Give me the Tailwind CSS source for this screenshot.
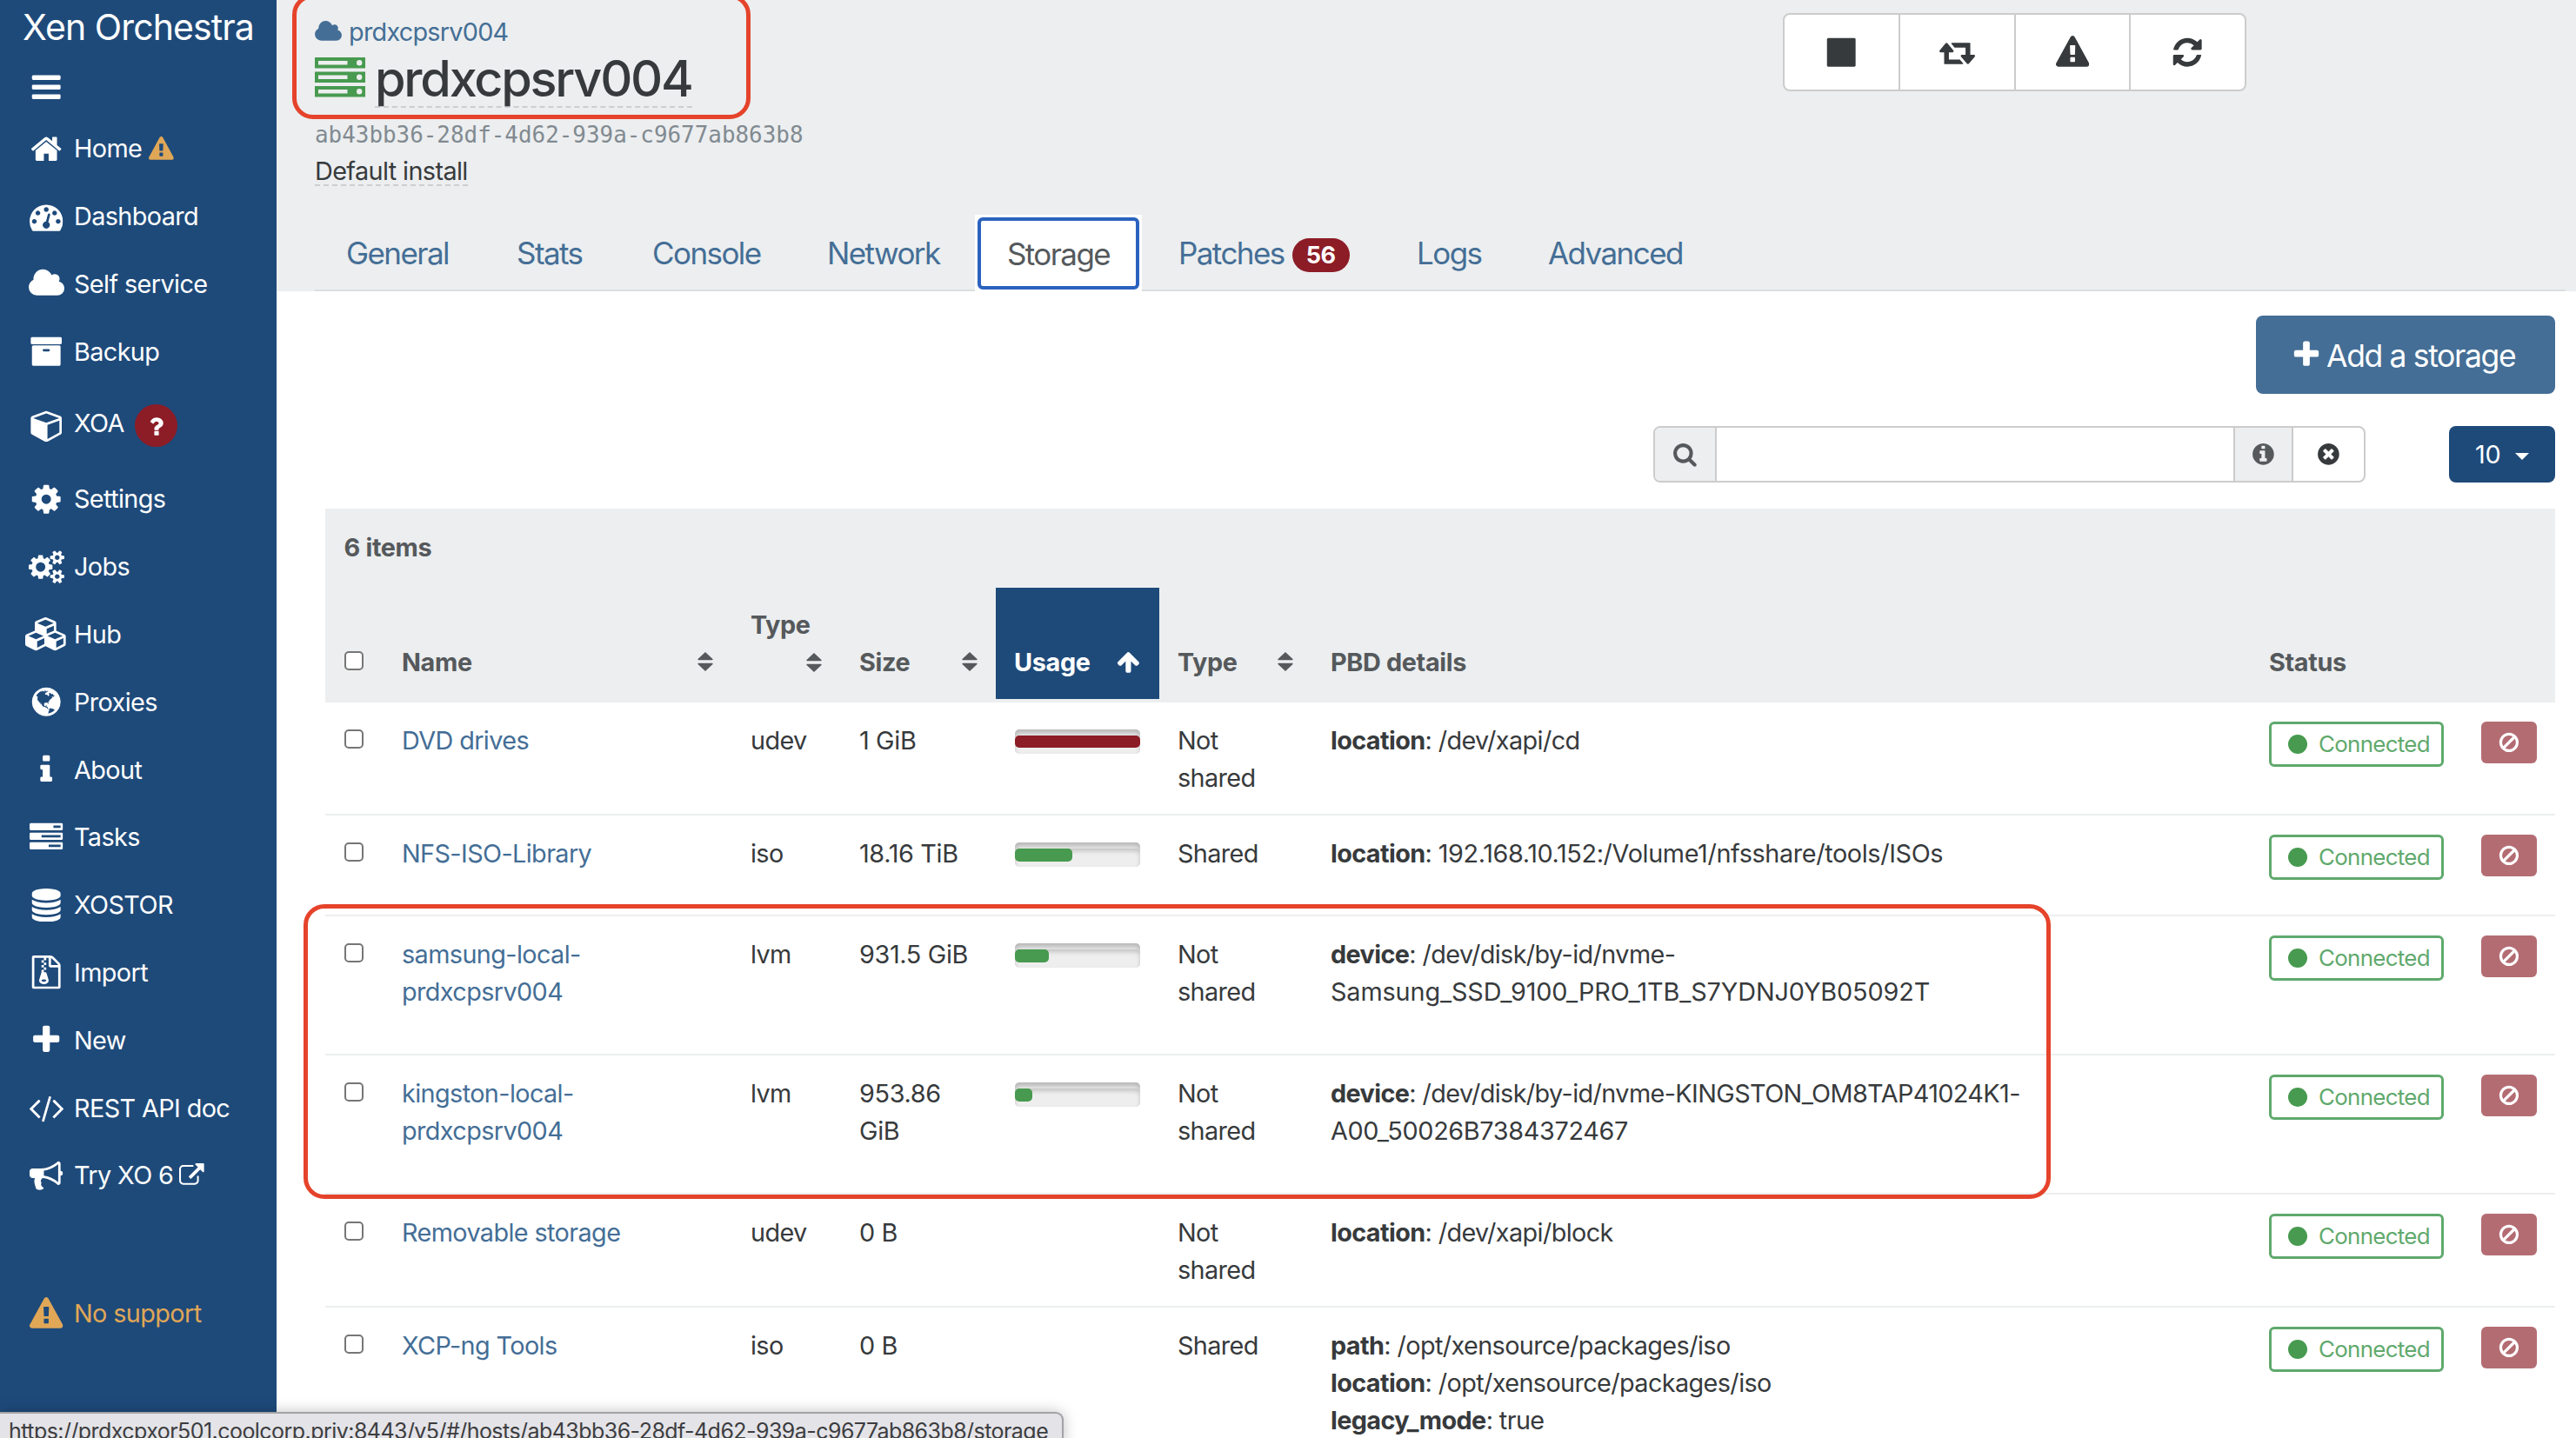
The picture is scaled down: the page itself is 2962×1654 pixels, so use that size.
<!DOCTYPE html>
<html lang="en">
<head>
  <meta charset="UTF-8" />
  <meta name="viewport" content="width=device-width, initial-scale=1" />
  <title>prdxcpsrv004 - Xen Orchestra</title>

  <!-- Tailwind -->
  <script src="https://cdn.jsdelivr.net/npm/@tailwindcss/browser@4"></script>
</head>
<body class="relative h-[1654px] w-[2962px] overflow-hidden bg-white font-[Inter,'Liberation_Sans',sans-serif] text-[28.8px] leading-[43.2px] tracking-[-0.021em] text-[#373a3c]">

  <!-- ───────────  Icon sprite  ─────────── -->
  <svg class="hidden">
    <symbol id="bars" viewBox="0 0 1792 1792"><path d="M1664 1344v128q0 26-19 45t-45 19h-1408q-26 0-45-19t-19-45v-128q0-26 19-45t45-19h1408q26 0 45 19t19 45zm0-512v128q0 26-19 45t-45 19h-1408q-26 0-45-19t-19-45v-128q0-26 19-45t45-19h1408q26 0 45 19t19 45zm0-512v128q0 26-19 45t-45 19h-1408q-26 0-45-19t-19-45v-128q0-26 19-45t45-19h1408q26 0 45 19t19 45z"/></symbol>
    <symbol id="home" viewBox="0 0 1792 1792"><path d="M1472 992v480q0 26-19 45t-45 19h-384v-384h-256v384h-384q-26 0-45-19t-19-45v-480q0-1 .5-3t.5-3l575-474 575 474q1 2 1 6zm223-69l-62 74q-8 9-21 11h-3q-13 0-21-7l-692-577-692 577q-12 8-24 7-13-2-21-11l-62-74q-8-10-7-23.5t11-21.5l719-599q32-26 76-26t76 26l244 204v-195q0-14 9-23t23-9h192q14 0 23 9t9 23v408l219 182q10 8 11 21.5t-7 23.5z"/></symbol>
    <symbol id="warning" viewBox="0 0 1792 1792"><path d="M1024 1375v-190q0-14-9.5-23.5t-22.5-9.5h-192q-13 0-22.5 9.5t-9.5 23.5v190q0 14 9.5 23.5t22.5 9.5h192q13 0 22.5-9.5t9.5-23.5zm-2-374l18-459q0-12-10-19-13-11-24-11h-220q-11 0-24 11-10 7-10 21l17 457q0 10 10 16.5t24 6.5h185q14 0 23.5-6.5t10.5-16.5zm-14-934l768 1408q35 63-2 126-17 29-46.5 46t-63.5 17h-1536q-34 0-63.5-17t-46.5-46q-37-63-2-126l768-1408q17-31 47-49t65-18 65 18 47 49z"/></symbol>
    <symbol id="dashboard" viewBox="0 0 1792 1792"><path d="M384 1152q0-53-37.5-90.5t-90.5-37.5-90.5 37.5-37.5 90.5 37.5 90.5 90.5 37.5 90.5-37.5 37.5-90.5zm192-448q0-53-37.5-90.5t-90.5-37.5-90.5 37.5-37.5 90.5 37.5 90.5 90.5 37.5 90.5-37.5 37.5-90.5zm428 481l101-382q6-26-7.5-48.5t-38.5-29.5-48 6.5-30 39.5l-101 382q-60 5-107 43.5t-63 98.5q-20 77 20 146t117 89 146-20 89-117q16-60-6-117t-72-91zm660-33q0-53-37.5-90.5t-90.5-37.5-90.5 37.5-37.5 90.5 37.5 90.5 90.5 37.5 90.5-37.5 37.5-90.5zm-640-640q0-53-37.5-90.5t-90.5-37.5-90.5 37.5-37.5 90.5 37.5 90.5 90.5 37.5 90.5-37.5 37.5-90.5zm448 192q0-53-37.5-90.5t-90.5-37.5-90.5 37.5-37.5 90.5 37.5 90.5 90.5 37.5 90.5-37.5 37.5-90.5zm320 448q0 261-141 483-19 29-54 29h-1402q-35 0-54-29-141-221-141-483 0-182 71-348t191-286 286-191 348-71 348 71 286 191 191 286 71 348z"/></symbol>
    <symbol id="cloud" viewBox="64 0 1920 1792"><path d="M1984 1152q0 159-112.5 271.5t-271.5 112.5h-1088q-185 0-316.5-131.5t-131.5-316.5q0-132 71-241.5t187-163.5q-2-28-2-43 0-212 150-362t362-150q158 0 286.5 88t187.5 230q70-62 166-62 106 0 181 75t75 181q0 75-41 138 129 30 213 134.5t84 239.5z"/></symbol>
    <symbol id="archive" viewBox="0 0 1792 1792"><path d="M1088 832q0-26-19-45t-45-19h-256q-26 0-45 19t-19 45 19 45 45 19h256q26 0 45-19t19-45zm576-192v960q0 26-19 45t-45 19h-1408q-26 0-45-19t-19-45v-960q0-26 19-45t45-19h1408q26 0 45 19t19 45zm64-448v256q0 26-19 45t-45 19h-1536q-26 0-45-19t-19-45v-256q0-26 19-45t45-19h1536q26 0 45 19t19 45z"/></symbol>
    <symbol id="cube" viewBox="-64 0 1792 1792"><path d="M896 1629l640-349v-636l-640 233v752zm-64-865l698-254-698-254-698 254zm832-252v768q0 35-18 65t-49 47l-704 384q-28 16-61 16t-61-16l-704-384q-31-17-49-47t-18-65v-768q0-40 23-73t61-47l704-256q22-8 44-8t44 8l704 256q38 14 61 47t23 73z"/></symbol>
    <symbol id="question" viewBox="0 0 1792 1792"><path d="M1088 1256v240q0 16-12 28t-28 12h-240q-16 0-28-12t-12-28v-240q0-16 12-28t28-12h240q16 0 28 12t12 28zm316-600q0 54-15.5 101t-35 76.5-55 59.5-57.5 43.5-61 35.5q-41 23-68.5 65t-27.5 67q0 17-12 32.5t-28 15.5h-240q-15 0-25.5-18.5t-10.5-37.5v-45q0-83 65-156.5t143-108.5q59-27 84-56t25-76q0-42-46.5-74t-107.5-32q-65 0-108 29-35 25-107 115-13 16-31 16-12 0-25-8l-164-125q-13-10-15.5-25t5.5-28q160-266 464-266 80 0 161 31t146 83 106 127.5 41 158.5z"/></symbol>
    <symbol id="cog" viewBox="0 0 1792 1792"><path d="M1152 896q0-106-75-181t-181-75-181 75-75 181 75 181 181 75 181-75 75-181zm512-109v222q0 12-8 23t-20 13l-185 28q-19 54-39 91 35 50 107 138 10 12 10 25t-9 23q-27 37-99 108t-94 71q-12 0-26-9l-138-108q-44 23-91 38-16 136-29 186-7 28-36 28h-222q-14 0-24.5-8.5t-11.5-21.5l-28-184q-49-16-90-37l-141 107q-10 9-25 9-14 0-25-11-126-114-165-168-7-10-7-23 0-12 8-23 15-21 51-66.5t54-70.5q-27-50-41-99l-183-27q-13-2-21-12.5t-8-23.5v-222q0-12 8-23t19-13l186-28q14-46 39-92-40-57-107-138-10-12-10-24 0-10 9-23 26-36 98.5-107.5t94.5-71.5q13 0 26 10l138 107q44-23 91-38 16-136 29-186 7-28 36-28h222q14 0 24.5 8.5t11.5 21.5l28 184q49 16 90 37l142-107q9-9 24-9 13 0 25 10 129 119 165 170 7 8 7 22 0 12-8 23-15 21-51 66.5t-54 70.5q26 50 41 98l183 28q13 2 21 12.5t8 23.5z"/></symbol>
    <symbol id="cogs" viewBox="0 0 1920 1792"><path d="M896 896q0-106-75-181t-181-75-181 75-75 181 75 181 181 75 181-75 75-181zm768 512q0-52-38-90t-90-38-90 38-38 90q0 53 37.5 90.5t90.5 37.5 90.5-37.5 37.5-90.5zm0-1024q0-52-38-90t-90-38-90 38-38 90q0 53 37.5 90.5t90.5 37.5 90.5-37.5 37.5-90.5zm-384 421v185q0 10-7 19.5t-16 10.5l-155 24q-11 35-32 76 34 48 90 115 7 11 7 20 0 12-7 19-23 30-82.5 89.5t-78.5 59.5q-11 0-21-7l-115-90q-37 19-77 31-11 108-23 155-7 24-30 24h-186q-11 0-20-7.5t-10-17.5l-23-153q-34-10-75-31l-118 89q-7 7-20 7-11 0-21-8-144-133-144-160 0-9 7-19 10-14 41-53t47-61q-23-44-35-82l-152-24q-10-1-17-9.5t-7-19.5v-185q0-10 7-19.5t16-10.5l155-24q11-35 32-76-34-48-90-115-7-11-7-20 0-12 7-20 22-30 82-89t79-59q11 0 21 7l115 90q34-18 77-32 11-108 23-154 7-24 30-24h186q11 0 20 7.5t10 17.5l23 153q34 10 75 31l118-89q8-7 20-7 11 0 21 8 144 133 144 160 0 8-7 19-12 16-42 54t-45 60q23 48 34 82l152 23q10 2 17 10.5t7 19.5zm640 533v140q0 16-149 31-12 27-30 52 51 113 51 138 0 4-4 7-122 71-124 71-8 0-46-47t-52-68q-20 2-30 2t-30-2q-14 21-52 68t-46 47q-2 0-124-71-4-3-4-7 0-25 51-138-18-25-30-52-149-15-149-31v-140q0-16 149-31 13-29 30-52-51-113-51-138 0-4 4-7 4-2 35-20t59-34 30-16q8 0 46 46.5t52 67.5q20-2 30-2t30 2q51-71 92-112l6-2q4 0 124 70 4 3 4 7 0 25-51 138 17 23 30 52 149 15 149 31zm0-1024v140q0 16-149 31-12 27-30 52 51 113 51 138 0 4-4 7-122 71-124 71-8 0-46-47t-52-68q-20 2-30 2t-30-2q-14 21-52 68t-46 47q-2 0-124-71-4-3-4-7 0-25 51-138-18-25-30-52-149-15-149-31v-140q0-16 149-31 13-29 30-52-51-113-51-138 0-4 4-7 4-2 35-20t59-34 30-16q8 0 46 46.5t52 67.5q20-2 30-2t30 2q51-71 92-112l6-2q4 0 124 70 4 3 4 7 0 25-51 138 17 23 30 52 149 15 149 31z"/></symbol>
    <symbol id="cubes" viewBox="0 0 2304 1792"><path d="M640 1632l384-192v-314l-384 164v342zm-64-454l404-173-404-173-404 173zm1088 454l384-192v-314l-384 164v342zm-64-454l404-173-404-173-404 173zm-448-293l384-165v-266l-384 164v267zm-64-379l441-189-441-189-441 189zm1088 518v416q0 36-19 67t-52 47l-448 224q-25 14-57 14t-57-14l-448-224q-4-2-7-4-2 2-7 4l-448 224q-25 14-57 14t-57-14l-448-224q-33-16-52-47t-19-67v-416q0-38 21.5-70t56.5-48l434-186v-400q0-38 21.5-70t56.5-48l448-192q23-10 50-10t50 10l448 192q35 16 56.5 48t21.5 70v400l434 186q36 16 57 48t21 70z"/></symbol>
    <symbol id="globe" viewBox="0 0 1792 1792"><path d="M896 128q209 0 385.5 103t279.5 279.5 103 385.5-103 385.5-279.5 279.5-385.5 103-385.5-103-279.5-279.5-103-385.5 103-385.5 279.5-279.5 385.5-103zm274 521q-2 1-9.5 9.5t-13.5 9.5q2 0 4.5-5t5-11 3.5-7q6-7 22-15 14-6 52-12 34-8 51 11-2-2 9.5-13t14.5-12q3-2 15-4.5t15-7.5l2-22q-12 1-17.5-7t-6.5-21q0 2-6 8 0-7-4.5-8t-11.5 1-9 1q-10-3-15-7.5t-8-16.5-4-15q-2-5-9.5-11t-9.5-10q-1-2-2.5-5.5t-3-6.5-4-5.5-5.5-2.5-7 5-7.5 10-4.5 5q-3-2-6-1.5t-4.5 1-4.5 3-5 3.5q-3 2-8.5 3t-8.5 2q15-5-1-11-10-4-16-3 9-4 7.5-12t-8.5-14h5q-1-4-8.5-8.5t-17.5-8.5-13-6q-8-5-34-9.5t-33-.5q-5 6-4.5 10.5t4 14 3.5 12.5q1 6-5.5 13t-6.5 12q0 7 14 15.5t10 21.5q-3 8-16 16t-16 12q-5 8-1.5 18.5t10.5 16.5q2 2 1.5 4t-3.5 4.5-5.5 4-6.5 3.5l-3 2q-11 5-20.5-6t-13.5-26q-7-25-16-30-23-8-29 1-5-13-41-26-25-9-58-4 6-1 0-15-7-15-19-12 3-6 4-17.5t1-13.5q3-13 12-23 1-1 7-8.5t9.5-13.5.5-6q35 4 50-11 5-5 11.5-17t10.5-17q9-6 14-5.5t14.5 5.5 14.5 5q14 1 15.5-11t-7.5-20q12 1 3-17-4-7-8-9-12-4-27 5-8 4 2 8-1-1-9.5 10.5t-16.5 17.5-16-5q-1-1-5.5-13.5t-9.5-13.5q-8 0-16 15 3-8-11-15t-24-8q19-12-8-27-7-4-20.5-5t-19.5 4q-5 7-5.5 11.5t5 8 10.5 5.5 11.5 4 8.5 3q14 10 8 14-2 1-8.5 3.5t-11.5 4.5-6 4q-3 4 0 14t-2 14q-5-5-9-17.5t-7-16.5q7 9-25 6l-10-1q-4 0-16 2t-20.5 1-13.5-8q-4-8 0-20 1-4 4-2-4-3-11-9.5t-10-8.5q-46 15-94 41 6 1 12-1 5-2 13-6.5t10-5.5q34-14 42-7l5-5q14 16 20 25-7-4-30-1-20 6-22 12 7 12 5 18-4-3-11.5-10t-14.5-11-15-5q-16 0-22 1-146 80-235 222 7 7 12 8 4 1 5 9t2.5 11 11.5-3q9 8 3 19 1-1 44 27 19 17 21 21 3 11-10 18-1-2-9-9t-9-4q-3 5 .5 18.5t10.5 12.5q-7 0-9.5 16t-2.5 35.5-1 23.5l2 1q-3 12 5.5 34.5t21.5 19.5q-13 3 20 43 6 8 8 9 3 2 12 7.5t15 10 10 10.5q4 5 10 22.5t14 23.5q-2 6 9.5 20t10.5 23q-1 0-2.5 1t-2.5 1q3 7 15.5 14t15.5 13q1 3 2 10t3 11 8 2q2-20-24-62-15-25-17-29-3-5-5.5-15.5t-4.5-14.5q2 0 6 1.5t8.5 3.5 7.5 4 2 3q-3 7 2 17.5t12 18.5 17 19 12 13q6 6 14 19.5t0 13.5q9 0 20 10.5t17 19.5q5 8 8 26t5 24q2 7 8.5 13.5t12.5 9.5l16 8 13 7q5 2 18.5 10.5t21.5 11.5q10 4 16 4t14.5-2.5 13.5-3.5q15-2 29 15t21 21q36 19 55 11-2 1 .5 7.5t8 15.5 9 14.5 5.5 8.5q5 6 18 15t18 15q6-4 7-9-3 8 7 20t18 10q14-3 14-32-31 15-49-18 0-1-2.5-5.5t-4-8.5-2.5-8.5 0-7.5 5-3q9 0 10-3.5t-2-12.5-4-13q-1-8-11-20t-12-15q-5 9-16 8t-16-9q0 1-1.5 5.5t-1.5 6.5q-13 0-15-1 1-3 2.5-17.5t3.5-22.5q1-4 5.5-12t7.5-14.5 4-12.5-4.5-9.5-17.5-2.5q-19 1-26 20-1 3-3 10.500t-5 11.500-9 7q-7 3-24 2t-24-5q-13-8-22.500-29t-9.500-37q0-10 2.500-26.500t3-25-5.500-24.500q3-2 9-9.500t10-10.500q2-1 4.500-1.500t4.500 0 4-1.500 3-6q-1-1-4-3-3-3-4-3 7 3 28.500-1.500t27.500 1.500q15 11 22-2 0-1-2.500-9.500t-.500-13.500q5 27 29 9 3 3 15.500 5t17.500 5q3 2 7 5.500t5.500 4.500 5-.500 8.500-6.500q10 14 12 24 11 40 19 44 7 3 11 2t4.500-9.500 0-14-1.500-12.500l-1-8v-18l-1-8q-15-3-18.500-12t1.500-18.500 15-18.500q1-1 8-3.500t15.500-6.500 12.500-8q21-19 15-35 7 0 11-9-1 0-5-3t-7.500-5-4.500-2q9-5 2-16 5-3 7.500-11t7.500-10q9 12 21 2 7-8 1-16 5-7 20.500-10.500t18.500-9.500q7 2 8-2t1-12 3-12q4-5 15-9t13-5l17-11q3-4 0-4 18 2 31-11 10-11-6-20 3-6-3-9.500t-15-5.500q3-1 11.500-.500t10.500-1.500q15-10-7-16-17-5-43 12zm-163 877q206-36 351-189-3-3-12.500-4.500t-12.500-3.500q-18-7-24-8 1-7-2.500-13t-8-9-12.500-8-11-7q-2-2-7-6t-7-5.500-7.500-4.500-8.500-2-10 1l-3 1q-3 1-5.500 2.500t-5.500 3-4 3 0 2.500q-21-17-36-22-5-1-11-5.500t-10.500-7-10-1.500-11.500 7q-5 5-6 15t-2 13q-7-5 0-17.500t2-18.500q-3-6-10.500-4.500t-12 4.500-11.500 8.500-9 6.500-8.500 5.500-8.500 7.500q-3 4-6 12t-5 11q-2-4-11.500-6.500t-9.500-5.500q2 10 4 35t5 38q7 31-12 48-27 25-29 40-4 22 12 26 0 7-8 20.500t-7 21.500q0 6 2 16z"/></symbol>
    <symbol id="info" viewBox="0 0 1792 1792"><path d="M1216 1344v128q0 26-19 45t-45 19h-512q-26 0-45-19t-19-45v-128q0-26 19-45t45-19h64v-384h-64q-26 0-45-19t-19-45v-128q0-26 19-45t45-19h384q26 0 45 19t19 45v576h64q26 0 45 19t19 45zm-128-1152v192q0 26-19 45t-45 19h-256q-26 0-45-19t-19-45v-192q0-26 19-45t45-19h256q26 0 45 19t19 45z"/></symbol>
    <symbol id="tasks" viewBox="0 0 1792 1792"><path d="M1024 1408h640v-128h-640v128zm-384-512h1024v-128h-1024v128zm640-512h384v-128h-384v128zm512 832v256q0 26-19 45t-45 19h-1664q-26 0-45-19t-19-45v-256q0-26 19-45t45-19h1664q26 0 45 19t19 45zm0-512v256q0 26-19 45t-45 19h-1664q-26 0-45-19t-19-45v-256q0-26 19-45t45-19h1664q26 0 45 19t19 45zm0-512v256q0 26-19 45t-45 19h-1664q-26 0-45-19t-19-45v-256q0-26 19-45t45-19h1664q26 0 45 19t19 45z"/></symbol>
    <symbol id="database" viewBox="0 0 1792 1792"><path d="M896 768q237 0 443-43t325-127v170q0 69-103 128t-280 93.5-385 34.5-385-34.5-280-93.5-103-128v-170q119 84 325 127t443 43zm0 768q237 0 443-43t325-127v170q0 69-103 128t-280 93.5-385 34.5-385-34.5-280-93.5-103-128v-170q119 84 325 127t443 43zm0-384q237 0 443-43t325-127v170q0 69-103 128t-280 93.5-385 34.5-385-34.5-280-93.5-103-128v-170q119 84 325 127t443 43zm0-1152q208 0 385 34.5t280 93.5 103 128v128q0 69-103 128t-280 93.5-385 34.5-385-34.5-280-93.5-103-128v-128q0-69 103-128t280-93.5 385-34.5z"/></symbol>
    <symbol id="zip" viewBox="0 0 1792 1792"><path d="M768 384v-128h-128v128h128zm128 128v-128h-128v128h128zm-128 128v-128h-128v128h128zm128 128v-128h-128v128h128zm700-388q28 28 48 76t20 88v1152q0 40-28 68t-68 28h-1344q-40 0-68-28t-28-68v-1600q0-40 28-68t68-28h896q40 0 88 20t76 48zm-444-244v376h376q-10-29-22-41l-313-313q-12-12-41-22zm384 1528v-1024h-416q-40 0-68-28t-28-68v-416h-128v128h-128v-128h-512v1536h1280zm-627-721l107 349q8 27 8 52 0 83-72.5 137.5t-183.5 54.5-183.5-54.5-72.5-137.5q0-25 8-52 21-63 120-396v-128h128v128h79q22 0 39 13t23 34zm-141 465q53 0 90.5-19t37.5-45-37.5-45-90.5-19-90.5 19-37.5 45 37.5 45 90.5 19z"/></symbol>
    <symbol id="plus" viewBox="0 0 1792 1792"><path d="M1600 736v192q0 40-28 68t-68 28h-416v416q0 40-28 68t-68 28h-192q-40 0-68-28t-28-68v-416h-416q-40 0-68-28t-28-68v-192q0-40 28-68t68-28h416v-416q0-40 28-68t68-28h192q40 0 68 28t28 68v416h416q40 0 68 28t28 68z"/></symbol>
    <symbol id="code" viewBox="0 0 1920 1792"><path d="M617 1399l-50 50q-10 10-23 10t-23-10l-466-466q-10-10-10-23t10-23l466-466q10-10 23-10t23 10l50 50q10 10 10 23t-10 23l-393 393 393 393q10 10 10 23t-10 23zm591-1067l-373 1291q-4 13-15.5 19.5t-23.5 2.5l-62-17q-13-4-19.5-15.5t-2.5-24.5l373-1291q4-13 15.5-19.5t23.5-2.5l62 17q13 4 19.5 15.5t2.5 24.5zm657 651l-466 466q-10 10-23 10t-23-10l-50-50q-10-10-10-23t10-23l393-393-393-393q-10-10-10-23t10-23l50-50q10-10 23-10t23 10l466 466q10 10 10 23t-10 23z"/></symbol>
    <symbol id="bullhorn" viewBox="0 0 1792 1792"><path d="M1664 640q53 0 90.5 37.5t37.5 90.5-37.5 90.5-90.5 37.5v384q0 52-38 90t-90 38q-417-347-812-380-58 19-91 66t-31 100.5 40 92.5q-20 33-23 65.5t6 58 33.5 55 48 50 61.5 50.5q-29 58-111.5 83t-168.5 11.5-132-55.5q-7-23-29.5-87.5t-32-94.5-23-89-15-101 3.5-98.5 22-110.5h-122q-66 0-113-47t-47-113v-192q0-66 47-113t113-47h480q435 0 896-384 52 0 90 38t38 90v384zm-128 604v-954q-394 302-768 343v270q377 42 768 341z"/></symbol>
    <symbol id="external" viewBox="0 0 1792 1792"><path d="M1408 928v320q0 119-84.5 203.5t-203.5 84.5h-832q-119 0-203.5-84.5t-84.5-203.5v-832q0-119 84.5-203.5t203.5-84.5h704q14 0 23 9t9 23v64q0 14-9 23t-23 9h-704q-66 0-113 47t-47 113v832q0 66 47 113t113 47h832q66 0 113-47t47-113v-320q0-14 9-23t23-9h64q14 0 23 9t9 23zm384-864v512q0 26-19 45t-45 19-45-19l-176-176-652 652q-10 10-23 10t-23-10l-114-114q-10-10-10-23t10-23l652-652-176-176q-19-19-19-45t19-45 45-19h512q26 0 45 19t19 45z"/></symbol>
    <symbol id="stop" viewBox="0 0 1792 1792"><path d="M1664 192v1408q0 26-19 45t-45 19h-1408q-26 0-45-19t-19-45v-1408q0-26 19-45t45-19h1408q26 0 45 19t19 45z"/></symbol>
    <symbol id="retweet" viewBox="0 0 1920 1792"><path d="M1280 1504q0 13-9.5 22.5t-22.5 9.5h-960q-8 0-13.5-2t-9-7-5.5-8-3-11.5-1-11.5v-600h-192q-26 0-45-19t-19-45q0-24 15-41l320-384q19-22 49-22t49 22l320 384q15 17 15 41 0 26-19 45t-45 19h-192v384h576q16 0 25 11l160 192q7 10 7 21zm640-416q0 24-15 41l-320 384q-20 23-49 23t-49-23l-320-384q-15-17-15-41 0-26 19-45t45-19h192v-384h-576q-16 0-25-12l-160-192q-7-9-7-20 0-13 9.5-22.5t22.5-9.5h960q8 0 13.5 2t9 7 5.5 8 3 11.5 1 11.5v600h192q26 0 45 19t19 45z"/></symbol>
    <symbol id="refresh" viewBox="0 0 1792 1792"><path d="M1639 1056q0 5-1 7-64 268-268 434.5t-478 166.5q-146 0-282.5-55t-243.5-157l-129 129q-19 19-45 19t-45-19-19-45v-448q0-26 19-45t45-19h448q26 0 45 19t19 45-19 45l-137 137q71 66 161 102t187 36q134 0 250-65t186-179q11-17 53-117 8-23 30-23h192q13 0 22.5 9.5t9.5 22.5zm25-800v448q0 26-19 45t-45 19h-448q-26 0-45-19t-19-45 19-45l138-138q-148-137-349-137-134 0-250 65t-186 179q-11 17-53 117-8 23-30 23h-199q-13 0-22.5-9.5t-9.5-22.5v-7q65-268 270-434.5t480-166.5q146 0 284 55.5t245 156.5l130-129q19-19 45-19t45 19 19 45z"/></symbol>
    <symbol id="search" viewBox="0 0 1792 1792"><path d="M1216 832q0-185-131.5-316.5t-316.5-131.5-316.5 131.5-131.5 316.5 131.5 316.5 316.5 131.5 316.5-131.5 131.5-316.5zm512 832q0 52-38 90t-90 38q-54 0-90-38l-343-342q-179 124-399 124-143 0-273.5-55.5t-225-150-150-225-55.5-273.5 55.5-273.5 150-225 225-150 273.5-55.5 273.5 55.5 225 150 150 225 55.5 273.5q0 220-124 399l343 343q37 37 37 90z"/></symbol>
    <symbol id="info-circle" viewBox="0 0 1792 1792"><path d="M1152 1376v-160q0-14-9-23t-23-9h-96v-512q0-14-9-23t-23-9h-320q-14 0-23 9t-9 23v160q0 14 9 23t23 9h96v320h-96q-14 0-23 9t-9 23v160q0 14 9 23t23 9h448q14 0 23-9t9-23zm-128-896v-160q0-14-9-23t-23-9h-192q-14 0-23 9t-9 23v160q0 14 9 23t23 9h192q14 0 23-9t9-23zm640 416q0 209-103 385.5t-279.5 279.5-385.5 103-385.5-103-279.5-279.5-103-385.5 103-385.5 279.5-279.5 385.5-103 385.5 103 279.5 279.5 103 385.5z"/></symbol>
    <symbol id="times-circle" viewBox="0 0 1792 1792"><path d="M1277 1122q0-26-19-45l-181-181 181-181q19-19 19-45 0-27-19-46l-90-90q-19-19-46-19-26 0-45 19l-181 181-181-181q-19-19-45-19-27 0-46 19l-90 90q-19 19-19 46 0 26 19 45l181 181-181 181q-19 19-19 45 0 27 19 46l90 90q19 19 46 19 26 0 45-19l181-181 181 181q19 19 45 19 27 0 46-19l90-90q19-19 19-46zm387-226q0 209-103 385.5t-279.5 279.5-385.5 103-385.5-103-279.5-279.5-103-385.5 103-385.5 279.5-279.5 385.5-103 385.5 103 279.5 279.5 103 385.5z"/></symbol>
    <symbol id="ban" viewBox="0 0 1792 1792"><path d="M1440 893q0-161-87-295l-754 753q137 89 297 89 111 0 211.5-43.5t173.5-116.5 116-174.5 43-212.5zm-999 299l755-754q-135-91-300-91-148 0-273 73t-198 199-73 274q0 162 89 299zm1223-299q0 157-61 300t-163.5 246-245 164-298.5 61-298.5-61-245-164-163.5-246-61-300 61-299.5 163.5-245.5 245-164 298.5-61 298.5 61 245 164 163.5 245.5 61 299.5z"/></symbol>
    <symbol id="arrow-up" viewBox="0 0 1792 1792"><path d="M1675 971q0 51-37 90l-75 75q-38 38-91 38-54 0-90-38l-294-293v704q0 52-37.5 84.5t-90.5 32.5h-128q-53 0-90.5-32.5t-37.5-84.5v-704l-294 293q-36 38-90 38t-90-38l-75-75q-38-38-38-90 0-53 38-91l651-651q35-37 90-37 54 0 91 37l651 651q37 39 37 91z"/></symbol>
    <symbol id="sort" viewBox="0 0 18 22"><path d="M9 0l8.500 8q.6 1.200-.8 1.200H1.300q-1.400 0-.8-1.200zM9 22l8.500-8q.6-1.200-.8-1.200H1.300q-1.400 0-.8 1.200z"/></symbol>
    <symbol id="server" viewBox="0 0 58 46"><path fill-rule="evenodd" d="M0 0h58v12.500H0zM4 4v4.500h33.500V4zM48 6.200a3.200 3.200 0 1 0 6.400 0a3.200 3.200 0 1 0-6.400 0zM0 16.500h58V29H0zM4 20.500V25h33.500v-4.500zM48 22.700a3.200 3.200 0 1 0 6.400 0a3.200 3.200 0 1 0-6.400 0zM0 33h58v12.500H0zM4 37v4.500h33.500V37zM48 39.200a3.200 3.200 0 1 0 6.400 0a3.200 3.200 0 1 0-6.400 0z"/></symbol>
  </svg>

  <div class="flex h-full">

    <!-- ───────────  Sidebar  ─────────── -->
    <aside class="flex w-[318px] shrink-0 flex-col bg-[#1e4a7a] text-white">
      <h1 class="h-[62px] pl-[26px] text-[41px] leading-[62px] tracking-[-0.022em]">Xen Orchestra</h1>
      <div class="flex h-[70px] pt-[19px] pl-[34px]">
        <svg class="size-[38.4px] fill-current"><use href="#bars"/></svg>
      </div>
      <nav id="menu"></nav>
    </aside>

    <main class="min-w-0 flex-1">

      <!-- ───────────  Host header  ─────────── -->
      <header class="flex h-[335px] flex-col justify-between bg-[#eceeef] pl-[44px]">
        <div class="flex">
          <div class="w-[1688px] pt-[15px]">
            <div class="flex h-[43px] items-center tracking-[-0.026em] text-[#446e96]">
              <svg class="h-[28.8px] w-[31px] fill-current"><use href="#cloud"/></svg>
              <span class="ml-[8px]">prdxcpsrv004</span>
            </div>
            <div class="flex h-[74px] items-start pt-[2px]">
              <svg class="mt-[6px] h-[46px] w-[58px] fill-[#479a4f]"><use href="#server"/></svg>
              <span class="ml-[11px] h-[64px] border-b-2 border-dashed border-[#cccecf] text-[57.6px] leading-[61px] font-medium tracking-[-0.039em]">prdxcpsrv004</span>
            </div>
            <div class="h-[43px] font-['DejaVu_Sans_Mono',monospace] text-[25.92px] leading-[47px] tracking-normal text-[#818a91]">ab43bb36-28df-4d62-939a-c9677ab863b8</div>
            <span class="inline-block h-[39px] border-b-2 border-dashed border-[#cccecf] leading-[43px]">Default install</span>
          </div>
          <div class="mt-[15px] flex h-[90px] w-[533px] divide-x-2 divide-[#cccccc] rounded-[8px] border-2 border-[#cccccc] bg-white">
            <div class="flex flex-1 items-center justify-center"><svg class="size-[38.4px] fill-current"><use href="#stop"/></svg></div>
            <div class="flex flex-1 items-center justify-center"><svg class="h-[38.4px] w-[41px] fill-current"><use href="#retweet"/></svg></div>
            <div class="flex flex-1 items-center justify-center"><svg class="size-[38.4px] fill-current"><use href="#warning"/></svg></div>
            <div class="flex flex-1 items-center justify-center"><svg class="size-[38.4px] fill-current"><use href="#refresh"/></svg></div>
          </div>
        </div>

        <div class="mr-[12px] flex h-[88px] border-b-2 border-[#dcdee0] text-[35px] leading-[88px] tracking-[-0.045em] text-[#446e96]">
          <a class="w-[196px] pl-[36px]">General</a>
          <a class="w-[156px] pl-[36px]">Stats</a>
          <a class="w-[201px] pl-[36px]">Console</a>
          <a class="w-[206px] pl-[36px]">Network</a>
          <a class="mr-[6px] h-[88px] w-[192px] bg-white p-[3px]"><span class="block h-[83px] rounded-[6px] border-[4px] border-[#2b62bf] text-center leading-[76px] text-[#55595c]">Storage</span></a>
          <a class="flex w-[274px] pl-[36px]">Patches<span class="mt-[27px] ml-[9px] h-[39px] w-[66px] rounded-full bg-[#8c1c26] text-center text-[27px] leading-[39px] font-bold tracking-[-0.02em] text-white">56</span></a>
          <a class="w-[151px] pl-[36px]">Logs</a>
          <a class="pl-[36px]">Advanced</a>
        </div>
      </header>

      <!-- ───────────  Toolbar  ─────────── -->
      <div class="flex flex-col items-end pt-[28px] pr-[24px]">
        <button class="flex h-[90px] w-[344px] items-center rounded-[8px] bg-[#446e96] pl-[40px] text-[35.5px] tracking-[-0.038em] text-white">
          <svg class="mr-[5px] size-[36px] fill-current"><use href="#plus"/></svg><span class="mt-[3px]">Add a storage</span>
        </button>
        <div class="mt-[37px] flex h-[65px]">
          <div class="flex w-[819px] divide-x-2 divide-[#cccccc] overflow-hidden rounded-[8px] border-2 border-[#cccccc] text-[#55595c]">
            <div class="flex w-[71px] items-center justify-center bg-[#eceeef]"><svg class="size-[28.8px] fill-current"><use href="#search"/></svg></div>
            <div class="flex-1"></div>
            <div class="flex w-[67px] items-center justify-center bg-[#eceeef]"><svg class="size-[28.8px] fill-current"><use href="#info-circle"/></svg></div>
            <div class="flex w-[81px] items-center justify-center text-[#373a3c]"><svg class="size-[28.8px] fill-current"><use href="#times-circle"/></svg></div>
          </div>
          <button class="ml-[96px] flex w-[122px] items-center rounded-[8px] bg-[#1e4a7a] pl-[30px] tracking-[-0.01em] text-white">10<span class="mt-[4px] ml-[17px] border-x-[8px] border-t-[8px] border-x-transparent border-t-white"></span></button>
        </div>
      </div>

      <!-- ───────────  Storage table  ─────────── -->
      <div class="mt-[30px] ml-[56px] w-[2564px]">
        <div class="h-[223px] bg-[#eceeef] font-bold tracking-[-0.012em] text-[#55595c]">
          <div class="h-[91px] pt-[23px] pl-[21.6px]">6 items</div>
          <div class="grid h-[128px] grid-cols-[67px_401px_125px_178px_188px_176px_1079px_243px_107px] items-end">
            <div class="pb-[33px] pl-[22px]"><span class="block size-[22px] rounded-[5px] border-2 border-[#767676] bg-white"></span></div>
            <div class="flex items-center justify-between pr-[22px] pb-[21px] pl-[21px]">Name<svg class="h-[22px] w-[18px] fill-current"><use href="#sort"/></svg></div>
            <div class="pr-[22px] pb-[21px] pl-[21px]">Type<div class="flex h-[43px] items-center justify-end"><svg class="h-[22px] w-[18px] fill-current"><use href="#sort"/></svg></div></div>
            <div class="flex items-center justify-between px-[21px] pb-[21px]">Size<svg class="h-[22px] w-[18px] fill-current"><use href="#sort"/></svg></div>
            <div class="flex h-full items-end justify-between bg-[#1e4a7a] px-[21px] pb-[21px] text-white">Usage<svg class="mb-[7px] size-[28.8px] fill-current"><use href="#arrow-up"/></svg></div>
            <div class="flex items-center justify-between pr-[22px] pb-[21px] pl-[21px]">Type<svg class="h-[22px] w-[18px] fill-current"><use href="#sort"/></svg></div>
            <div class="px-[21px] pb-[21px]">PBD details</div>
            <div class="px-[21px] pb-[21px]">Status</div>
            <div></div>
          </div>
        </div>
        <div id="rows"></div>
      </div>
    </main>
  </div>

  <!-- Highlight frames -->
  <div class="absolute top-[-7px] left-[336px] h-[144px] w-[527px] rounded-[24px] border-[5px] border-[#e5432b]"></div>
  <div class="absolute top-[1040px] left-[349px] h-[339px] w-[2009px] rounded-[24px] border-[5px] border-[#e5432b]"></div>

  <!-- Link preview bar -->
  <div class="absolute top-[1624px] left-0 h-[40px] w-[1223px] rounded-tr-[9px] border-t-2 border-r-2 border-[#a3a3a6] bg-[#e4e4e8] pl-[10px] text-[25px] leading-[41px] tracking-[-0.022em] whitespace-nowrap text-[#3d3d40] shadow-[0_0_16px_rgba(0,0,0,0.25)]">https://prdxcpxor501.coolcorp.priv:8443/v5/#/hosts/ab43bb36-28df-4d62-939a-c9677ab863b8/storage</div>

  <script>
    // icon, icon width, label
    const menu = [
      ["home", 38.4, "Home"], ["dashboard", 38.4, "Dashboard"], ["cloud", 41, "Self service"],
      ["archive", 38.4, "Backup"], ["cube", 38.4, "XOA"], ["cog", 38.4, "Settings"],
      ["cogs", 41, "Jobs"], ["cubes", 49.4, "Hub"], ["globe", 38.4, "Proxies"],
      ["info", 38.4, "About"], ["tasks", 38.4, "Tasks"], ["database", 38.4, "XOSTOR"],
      ["zip", 38.4, "Import"], ["plus", 38.4, "New"], ["code", 41, "REST API doc"],
      ["bullhorn", 38.4, "Try XO 6"], ["warning", 38.4, "No support"],
    ];

    const extras = {
      "Home": `<svg class="ml-[8px] size-[28.8px] fill-[#e0a757]"><use href="#warning"/></svg>`,
      "XOA": `<span class="ml-[12px] flex size-[49px] items-center justify-center rounded-full bg-[#8c1c26]"><svg class="mt-[2px] size-[29px] fill-current"><use href="#question"/></svg></span>`,
      "Try XO 6": `<svg class="ml-[7px] size-[28.8px] fill-current"><use href="#external"/></svg>`,
    };

    const rowClass = {
      "XOA": "flex h-[92px] items-center",
      "No support": "mt-[81px] flex h-[77.8px] items-center text-[#e0a757]",
    };

    document.getElementById("menu").innerHTML = menu.map(([icon, width, label]) => `
      <a class="${rowClass[label] || "flex h-[77.8px] items-center"}">
        <span class="ml-[27px] mr-[5px] flex w-[53px] justify-center">
          <svg class="h-[38.4px] shrink-0 fill-current" style="width:${width}px"><use href="#${icon}"/></svg>
        </span>
        <span class="${label === "XOA" ? "-mt-[6px]" : ""}">${label}</span>${extras[label] || ""}
      </a>`).join("");

    const storages = [
      { name: "DVD drives", type: "udev", size: "1 GiB", usage: 100, shared: "Not shared",
        pbd: [["location", "/dev/xapi/cd"]] },
      { name: "NFS-ISO-Library", type: "iso", size: "18.16 TiB", usage: 46, shared: "Shared",
        pbd: [["location", `<span class="tracking-[-0.013em]">192.168.10.152:/Volume1/nfsshare/tools/ISOs</span>`]] },
      { name: "samsung-local-<br>prdxcpsrv004", type: "lvm", size: "931.5 GiB", usage: 27, shared: "Not shared",
        pbd: [["device", `/dev/disk/by-id/nvme-<br><span class="tracking-[-0.004em]">Samsung_SSD_9100_PRO_1TB_S7YDNJ0YB05092T</span>`]] },
      { name: "kingston-local-<br>prdxcpsrv004", type: "lvm", size: "953.86<br>GiB", usage: 14, shared: "Not shared",
        pbd: [["device", `/dev/disk/by-id/nvme-KINGSTON_OM8TAP41024K1-<br><span class="tracking-[-0.012em]">A00_50026B7384372467</span>`]] },
      { name: "Removable storage", type: "udev", size: "0 B", usage: 0, shared: "Not shared",
        pbd: [["location", "/dev/xapi/block"]] },
      { name: "XCP-ng Tools", type: "iso", size: "0 B", usage: 0, shared: "Shared",
        pbd: [["path", "/opt/xensource/packages/iso"], ["location", "/opt/xensource/packages/iso"], ["legacy_mode", "true"]] },
    ];

    const heights = [130, 116, 160, 160, 130, 170];

    const progress = (usage) => !usage ? "" : `
      <div class="mt-[9px] h-[28px] overflow-hidden rounded-[5px] bg-[#eeeeee] pt-[7px] shadow-[inset_0_4px_6px_rgba(0,0,0,0.25)]">
        <div class="h-[21px] rounded-[5px] bg-[#eeeeee] shadow-[inset_0_3px_5px_rgba(0,0,0,0.18)]">
          <div class="${usage > 90 ? "h-[14px] rounded-[5px] bg-[#8c1c26]" : "h-[15px] rounded-[5px] bg-[#479a4f]"}" style="width:${usage}%"></div>
        </div>
      </div>`;

    document.getElementById("rows").innerHTML = storages.map((sr, i) => `
      <div class="grid grid-cols-[67px_401px_125px_178px_188px_176px_1079px_243px_107px] border-b-2 border-[#eceeef] pt-[22px]" style="height:${heights[i]}px">
        <div class="pt-[9px] pl-[22px]"><span class="block size-[22px] rounded-[5px] border-2 border-[#767676] bg-white"></span></div>
        <div class="pl-[21px] text-[#446e96]">${sr.name}</div>
        <div class="pl-[21px]">${sr.type}</div>
        <div class="pl-[21px] tracking-[-0.012em]">${sr.size}</div>
        <div class="px-[22px]">${progress(sr.usage)}</div>
        <div class="px-[21px]">${sr.shared.replace(" ", "<br>")}</div>
        <div class="pl-[21px]">${sr.pbd.map(([k, v]) => `<div><b class="font-bold">${k}</b>: ${v}</div>`).join("")}</div>
        <div class="pl-[21px]">
          <div class="flex h-[52px] w-[201px] items-center rounded-[6px] border-[3px] border-[#5fa96d] pl-[19px] text-[25.92px] tracking-[-0.027em] text-[#5fa96d]">
            <span class="mr-[13px] size-[22px] rounded-full bg-[#479a4f]"></span>Connected
          </div>
        </div>
        <div class="pl-[22px]">
          <div class="flex h-[48px] w-[64px] items-center justify-center rounded-[6px] bg-[#b46c73]"><svg class="size-[25.9px] fill-white"><use href="#ban"/></svg></div>
        </div>
      </div>`).join("");
  </script>
</body>
</html>
